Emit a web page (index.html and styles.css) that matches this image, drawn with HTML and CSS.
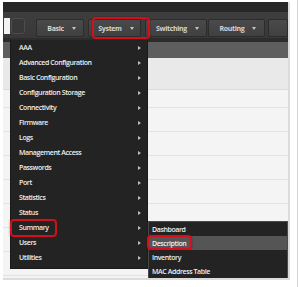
FILE: index.html
```html
<!DOCTYPE html>
<html>
<head>
<meta charset="utf-8">
<link rel="stylesheet" href="styles.css">
</head>
<body>
<div class="frame">
  <div class="shot">
    <div class="topband"></div>
    <div class="navbar">
      <div class="search"></div>
      <div class="sq"></div>
      <div class="btns">
        <div class="btn b-basic">Basic<span class="caret"></span></div>
        <div class="btn b-system">System<span class="caret"></span></div>
        <div class="btn b-switch">Switching<span class="caret"></span></div>
        <div class="btn b-route">Routing<span class="caret"></span></div>
        <div class="btn b-more"></div>
      </div>
    </div>
    <div class="darkline"></div>
    <div class="graybar"></div>
    <div class="thead"></div>
    <div class="rows">
      <div class="row r1"></div>
      <div class="row"></div>
      <div class="row"></div>
      <div class="row"></div>
      <div class="row"></div>
      <div class="row"></div>
      <div class="row"></div>
      <div class="row"></div>
      <div class="row"></div>
    </div>

    <ul class="menu">
      <li>AAA<span class="arr"></span></li>
      <li>Advanced Configuration<span class="arr"></span></li>
      <li>Basic Configuration<span class="arr"></span></li>
      <li>Configuration Storage<span class="arr"></span></li>
      <li>Connectivity<span class="arr"></span></li>
      <li>Firmware<span class="arr"></span></li>
      <li>Logs<span class="arr"></span></li>
      <li>Management Access<span class="arr"></span></li>
      <li>Passwords<span class="arr"></span></li>
      <li>Port<span class="arr"></span></li>
      <li>Statistics<span class="arr"></span></li>
      <li>Status<span class="arr"></span></li>
      <li>Summary<span class="arr"></span></li>
      <li>Users<span class="arr"></span></li>
      <li>Utilities<span class="arr"></span></li>
    </ul>

    <ul class="submenu">
      <li>Dashboard</li>
      <li class="active">Description</li>
      <li>Inventory</li>
      <li>MAC Address Table</li>
    </ul>

    <div class="mark m-system"></div>
    <div class="mark m-summary"></div>
    <div class="mark m-desc"></div>
  </div>
</div>
</body>
</html>
```

FILE: styles.css
```css
html, body {
  margin: 0;
  padding: 0;
  background: #ffffff;
}
body {
  width: 300px;
  height: 287px;
  overflow: hidden;
  position: relative;
  font-family: "Open Sans", "Liberation Sans", sans-serif;
}
.frame {
  width: 298px;
  height: 300px;
  border-right: 1px solid #d4d4d4;
  box-sizing: border-box;
  padding: 2px 0 0 3px;
}
.shot {
  position: relative;
  width: 285px;
  height: 276px;
  overflow: hidden;
  background: #f4f4f4;
  box-shadow: 1px 1px 0 1px #dcdcdc;
}
.topband {
  height: 10px;
  background: #272727;
}
.navbar {
  height: 26px;
  background: linear-gradient(#3e3e3e, #383838);
  display: flex;
  align-items: flex-start;
  padding-top: 6px;
  box-sizing: border-box;
}
.search {
  width: 8px;
  height: 16px;
  background: #f2f2f2;
  margin-left: 1px;
}
.sq {
  width: 17px;
  height: 16px;
  margin-left: 1px;
  border: 1px solid #4c4c4c;
  border-radius: 3px;
  background: #383838;
  box-sizing: border-box;
}
.btns {
  display: flex;
  margin-left: 11px;
  gap: 4px;
  padding-top: 1px;
}
.btn {
  height: 18px;
  box-sizing: border-box;
  border: 1px solid #2c2c2c;
  border-radius: 2px;
  background: linear-gradient(#4a4a4a, #404040);
  color: #d4d4d4;
  font-size: 7px;
  font-weight: 700;
  display: flex;
  align-items: center;
  justify-content: center;
  gap: 8px;
  letter-spacing: -0.35px;
  padding-left: 3px;
}
.b-basic { width: 48px; }
.b-system { width: 53px; }
.b-switch { width: 62px; }
.b-route { width: 57px; margin-left: -3px; }
.b-more { width: 20px; margin-left: -1px; }
.caret {
  width: 0;
  height: 0;
  border-left: 2.5px solid transparent;
  border-right: 2.5px solid transparent;
  border-top: 3px solid #c4c4c4;
}
.darkline {
  height: 4px;
  background: #2c2c2c;
}
.graybar {
  height: 16px;
  background: #5e5e5e;
}
.thead {
  height: 31px;
  background: #e9e9e9;
  border-bottom: 1px solid #dcdcdc;
}
.row {
  height: 23px;
  border-bottom: 1px solid #e2e2e2;
  background: #f4f4f4;
}
.row.r1 { height: 17px; }

.menu, .submenu {
  list-style: none;
  margin: 0;
  padding: 0;
  position: absolute;
  background: #232323;
  color: #f0f0f0;
  font-size: 7px;
  font-weight: 600;
  letter-spacing: -0.4px;
}
.menu {
  left: 7px;
  top: 38px;
  width: 138px;
  padding-bottom: 3px;
  border: 1px solid #1a1a1a;
  border-top: none;
  box-sizing: border-box;
}
.menu li {
  height: 15px;
  display: flex;
  align-items: center;
  justify-content: space-between;
  padding: 0 6px 0 8px;
}
.arr {
  width: 0;
  height: 0;
  border-top: 2.5px solid transparent;
  border-bottom: 2.5px solid transparent;
  border-left: 3px solid #bcbcbc;
}
.submenu {
  left: 145px;
  top: 219px;
  width: 140px;
  border: 1px solid #4a4a4a;
  box-sizing: border-box;
}
.submenu li {
  height: 14px;
  display: flex;
  align-items: center;
  padding-left: 3px;
}
.submenu li.active {
  background: #555555;
}
.mark {
  position: absolute;
  border: 2.5px solid #d0101c;
  border-radius: 4px;
  box-sizing: border-box;
  box-shadow: 0 0 2px rgba(120, 0, 0, 0.6);
}
.m-system { left: 89px; top: 15px; width: 58px; height: 22px; }
.m-summary { left: 7px; top: 217px; width: 47px; height: 18px; }
.m-desc { left: 144px; top: 233px; width: 45px; height: 15px; }
```
